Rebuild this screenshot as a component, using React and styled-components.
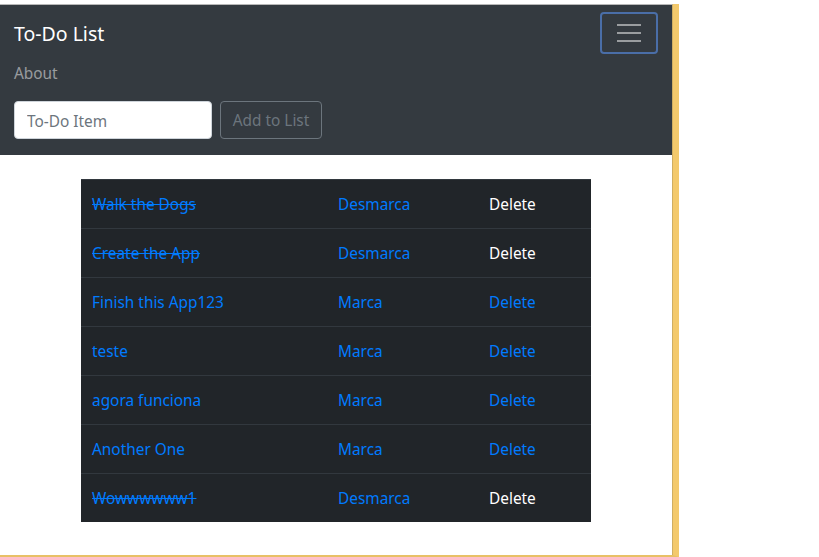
import React from 'react'
import styled, { createGlobalStyle } from 'styled-components'

const GlobalStyle = createGlobalStyle`
    html, body {
        margin: 0;
        padding: 0;
        background: #fff;
    }
    body {
        font-family: "Noto Sans", "Open Sans", sans-serif;
        font-size: 15.4px;
        line-height: 24px;
        color: #212529;
    }
`

const Outer = styled.div`
    margin-top: 4px;
    width: 673px;
    height: 551px;
    border-right: 6px solid #f3c96c;
    border-bottom: 2px solid #e8c066;
    box-sizing: content-box;
`

const Frame = styled.div`
    height: 100%;
    border-top: 1px solid #b8b8b8;
    border-right: 1px solid #cfae63;
    box-sizing: border-box;
    background: #fff;
`

const Navbar = styled.nav`
    background: #343a40;
    padding: 8px 14px 8px 14px;
    display: flex;
    flex-direction: column;
`

const TopRow = styled.div`
    display: flex;
    align-items: center;
    justify-content: space-between;
    height: 40px;
`

const Brand = styled.a`
    color: #fff;
    font-size: 19.5px;
    line-height: 30px;
    text-decoration: none;
    margin-top: 2px;
`

const Toggler = styled.button`
    width: 58px;
    height: 42px;
    padding: 0;
    background: transparent;
    border: 2px solid #4a6ea8;
    border-radius: 4px;
    display: flex;
    flex-direction: column;
    align-items: center;
    justify-content: center;
    gap: 6px;
`

const Bar = styled.span`
    display: block;
    width: 24px;
    height: 2px;
    background: rgba(255, 255, 255, 0.5);
`

const NavLink = styled.a`
    display: block;
    padding: 9px 0 7px;
    color: rgba(255, 255, 255, 0.5);
    text-decoration: none;
`

const Form = styled.form`
    display: flex;
    align-items: center;
    gap: 8px;
    margin: 8px 0;
`

const Input = styled.input`
    width: 198px;
    height: 38px;
    box-sizing: border-box;
    padding: 7px 12px 5px;
    font: inherit;
    border: 1px solid #ced4da;
    border-radius: 4px;
    color: #495057;
    &::placeholder {
        color: #6c757d;
    }
`

const AddButton = styled.button`
    width: 102px;
    height: 38px;
    box-sizing: border-box;
    padding: 7px 0 5px;
    font: inherit;
    white-space: nowrap;
    color: #6c757d;
    background: transparent;
    border: 1px solid #6c757d;
    border-radius: 4px;
`

const Content = styled.div`
    display: flex;
    justify-content: center;
    padding-top: 24px;
`

const Table = styled.table`
    width: 510px;
    border-collapse: collapse;
    background: #212529;
`

const Cell = styled.td`
    padding: 13px 11px 11px;
    border-top: 1px solid #32383e;
    width: ${p => p.w}px;
    box-sizing: border-box;
`

const ItemLink = styled.a`
    color: #007bff;
    text-decoration: ${p => (p.done ? 'line-through' : 'none')};
`

const ActionLink = styled.a`
    color: ${p => (p.light ? '#fff' : '#007bff')};
    text-decoration: none;
`

const todos = [
    { text: 'Walk the Dogs', done: true },
    { text: 'Create the App', done: true },
    { text: 'Finish this App123', done: false },
    { text: 'teste', done: false },
    { text: 'agora funciona', done: false },
    { text: 'Another One', done: false },
    { text: 'Wowwwwww1', done: true },
]

const App = () => (
    <>
        <GlobalStyle />
        <Outer>
            <Frame>
                <Navbar>
                    <TopRow>
                        <Brand href="#">To-Do List</Brand>
                        <Toggler type="button" aria-label="Toggle navigation">
                            <Bar />
                            <Bar />
                            <Bar />
                        </Toggler>
                    </TopRow>
                    <NavLink href="#">About</NavLink>
                    <Form onSubmit={e => e.preventDefault()}>
                        <Input placeholder="To-Do Item" />
                        <AddButton type="submit">Add to List</AddButton>
                    </Form>
                </Navbar>
                <Content>
                    <Table>
                        <tbody>
                            {todos.map(t => (
                                <tr key={t.text}>
                                    <Cell w={246}>
                                        <ItemLink href="#" done={t.done}>{t.text}</ItemLink>
                                    </Cell>
                                    <Cell w={151}>
                                        <ActionLink href="#">{t.done ? 'Desmarca' : 'Marca'}</ActionLink>
                                    </Cell>
                                    <Cell w={113}>
                                        <ActionLink href="#" light={t.done}>Delete</ActionLink>
                                    </Cell>
                                </tr>
                            ))}
                        </tbody>
                    </Table>
                </Content>
            </Frame>
        </Outer>
    </>
)

export default App
